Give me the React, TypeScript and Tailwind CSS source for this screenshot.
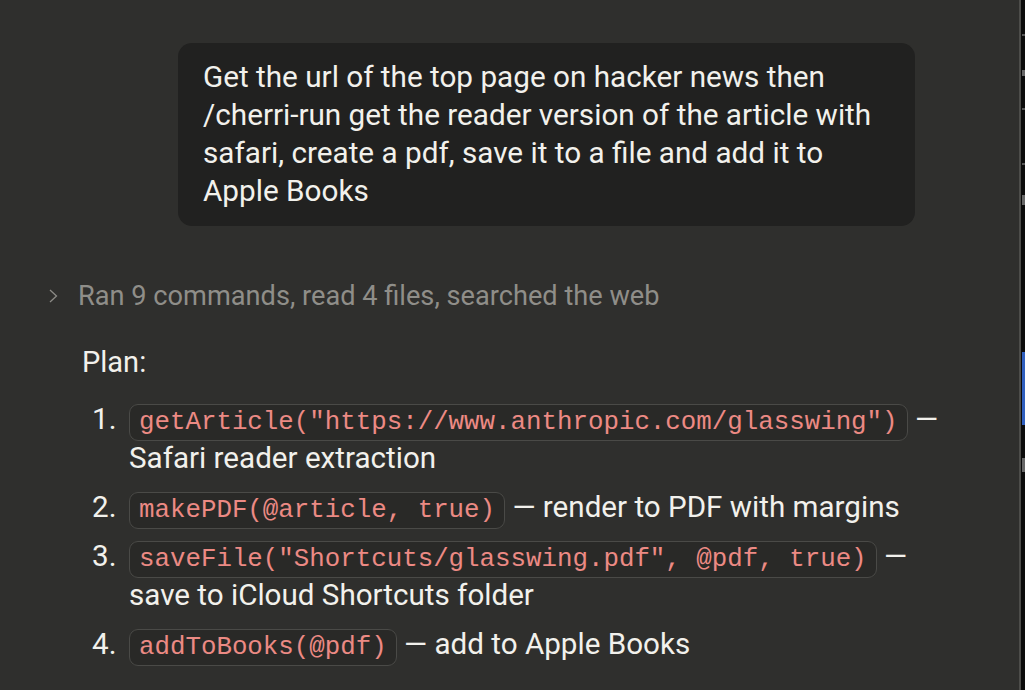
const steps = [
  {
    code: 'getArticle("https://www.anthropic.com/glasswing")',
    text: "Safari reader extraction",
  },
  { code: "makePDF(@article, true)", text: "render to PDF with margins" },
  {
    code: 'saveFile("Shortcuts/glasswing.pdf", @pdf, true)',
    text: "save to iCloud Shortcuts folder",
  },
  { code: "addToBooks(@pdf)", text: "add to Apple Books" },
];

const Chevron = () => (
  <svg width="16" height="16" viewBox="0 0 16 16" className="shrink-0">
    <path d="M4 2 L10.5 8 L4 14" fill="none" stroke="#8c8b86" strokeWidth="1.3" />
  </svg>
);

// scrollbar / minimap strip on the right edge
const Gutter = () => (
  <div className="flex h-full w-[6px] shrink-0">
    <div className="w-[2px] bg-[#4d4d4a]"></div>
    <div className="flex w-[4px] flex-col bg-[#0b0b0b] pl-[1px]">
      <div className="h-[34px]"></div>
      <div className="h-[2px] bg-[#555]"></div>
      <div className="h-[34px]"></div>
      <div className="h-[6px] bg-[#666]"></div>
      <div className="h-[32px]"></div>
      <div className="h-[2px] bg-[#555]"></div>
      <div className="h-[53px]"></div>
      <div className="h-[2px] bg-[#555]"></div>
      <div className="h-[30px]"></div>
      <div className="h-[10px] bg-[#666]"></div>
      <div className="h-[147px]"></div>
      <div className="h-[73px] bg-[#2f5fbf]"></div>
      <div className="h-[33px]"></div>
      <div className="h-[14px] bg-[#666]"></div>
    </div>
  </div>
);

export default function App() {
  return (
    <div
      className="flex h-[690px] w-full overflow-hidden bg-[#2f2f2d] text-[#f2f1ec]"
      style={{ fontFamily: "Roboto, 'Liberation Sans', sans-serif" }}
    >
      <div className="flex-1 pl-[46px] pt-[43px]">
        <div className="flex w-[869px] justify-end">
          <div className="w-[737px] rounded-[14px] bg-[#212120] px-[25px] pt-[15px] pb-[16px] text-[29.7px] leading-[38px]">
            Get the url of the top page on hacker news then /cherri-run get the reader version of the article with safari, create a pdf, save it to a file and add it to Apple Books
          </div>
        </div>

        <div className="mt-[51px] flex items-center gap-[16px] text-[27.2px] leading-[38px] text-[#8f8e89]">
          <Chevron />
          <span>Ran 9 commands, read 4 files, searched the web</span>
        </div>

        <div className="mt-[28px] pl-[36px] text-[29px] leading-[38px]">Plan:</div>

        <ol className="mt-[19px] flex flex-col gap-[10px] pl-[46px] text-[29.6px] leading-[39px]">
          {steps.map((s, i) => (
            <li key={i} className="flex">
              <span className="w-[37px] shrink-0">{i + 1}.</span>
              <div className="w-[831px]">
                <code
                  className="rounded-[9px] border border-[#4a4a47] bg-[#292927] px-[9px] py-[3px] text-[25.8px] leading-none text-[#ec8a84]"
                  style={{ fontFamily: "'Liberation Mono', monospace" }}
                >
                  {s.code}
                </code>{" "}
                — {s.text}
              </div>
            </li>
          ))}
        </ol>
      </div>
      <Gutter />
    </div>
  );
}
